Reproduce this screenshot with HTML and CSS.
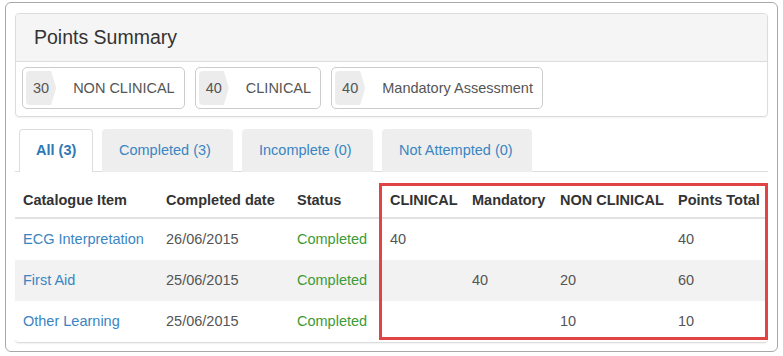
FILE: index.html
```html
<!DOCTYPE html>
<html>
<head>
<meta charset="utf-8">
<link rel="stylesheet" href="styles.css">
</head>
<body>
<div class="frame">
  <div class="panel">
    <div class="panel-heading">Points Summary</div>
    <div class="panel-body">
      <div class="badge"><span class="num">30</span><span class="label">NON CLINICAL</span></div>
      <div class="badge"><span class="num">40</span><span class="label">CLINICAL</span></div>
      <div class="badge"><span class="num">40</span><span class="label">Mandatory Assessment</span></div>
    </div>
  </div>
  <ul class="tabs">
    <li class="tab active t1">All (3)</li>
    <li class="tab t2">Completed (3)</li>
    <li class="tab t3">Incomplete (0)</li>
    <li class="tab t4">Not Attempted (0)</li>
  </ul>
  <div class="table-wrap">
    <table class="grid">
      <colgroup>
        <col class="c1"><col class="c2"><col class="c3"><col class="c4"><col class="c5"><col class="c6"><col class="c7">
      </colgroup>
      <thead>
        <tr><th>Catalogue Item</th><th>Completed date</th><th>Status</th><th>CLINICAL</th><th>Mandatory</th><th>NON CLINICAL</th><th>Points Total</th></tr>
      </thead>
      <tbody>
        <tr><td class="link">ECG Interpretation</td><td>26/06/2015</td><td class="ok">Completed</td><td>40</td><td></td><td></td><td>40</td></tr>
        <tr class="alt"><td class="link">First Aid</td><td>25/06/2015</td><td class="ok">Completed</td><td></td><td>40</td><td>20</td><td>60</td></tr>
        <tr><td class="link">Other Learning</td><td>25/06/2015</td><td class="ok">Completed</td><td></td><td></td><td>10</td><td>10</td></tr>
      </tbody>
    </table>
    <div class="highlight"></div>
  </div>
</div>
</body>
</html>
```

FILE: styles.css
```css
* { box-sizing: border-box; }
html, body { margin: 0; padding: 0; background: #fff; }
body {
  font-family: "Liberation Sans", Arial, sans-serif;
  font-size: 14.5px;
  color: #555;
}
.frame {
  margin: 2px 5px 0 5px;
  width: 773px;
  height: 350px;
  border: 1px solid #a8a8a8;
  border-radius: 6px;
  padding: 10px 9px 9px 9px;
}
.panel {
  border: 1px solid #dcdcdc;
  border-radius: 4px;
  box-shadow: 0 1px 2px rgba(0,0,0,0.06);
}
.panel-heading {
  background: #f5f5f5;
  border-bottom: 1px solid #dcdcdc;
  border-radius: 3px 3px 0 0;
  height: 48px;
  line-height: 47px;
  padding-left: 18px;
  font-size: 19.5px;
  color: #333;
}
.panel-body {
  display: flex;
  gap: 10px;
  padding: 5px 6px 7px 6px;
}
.badge {
  display: flex;
  align-items: center;
  border: 1px solid #ccc;
  border-radius: 5px;
  padding: 3px;
  height: 42px;
}
.num {
  background: #ececec;
  height: 34px;
  line-height: 34px;
  padding: 0 7px 0 7px;
  border-radius: 4px 0 0 4px;
  clip-path: polygon(0 0, calc(100% - 5px) 0, 100% 50%, calc(100% - 5px) 100%, 0 100%);
  color: #555;
}
.label {
  margin-left: 17px;
  margin-right: 6px;
  color: #555;
}
.tabs {
  list-style: none;
  margin: 12px 0 0 0;
  padding: 0 0 0 4px;
  display: flex;
  gap: 9px;
  border-bottom: 1px solid #ddd;
  height: 43px;
}
.tab {
  height: 43px;
  line-height: 41px;
  padding: 0 0 0 16px;
  background: #eee;
  border: 1px solid #eee;
  border-bottom: none;
  border-radius: 4px 4px 0 0;
  color: #3a85c2;
  white-space: nowrap;
}
.t1 { width: 74px; }
.t2 { width: 131px; }
.t3 { width: 131px; }
.t4 { width: 150px; }
.tab.active {
  background: #fff;
  border-color: #ddd;
  font-weight: bold;
  color: #2f78b5;
  margin-bottom: -1px;
}
.table-wrap {
  position: relative;
  padding-top: 10px;
  border-bottom: 1px solid #ddd;
  border-radius: 0 0 4px 4px;
  box-shadow: 0 1px 1px rgba(0,0,0,0.05);
}
.grid {
  width: 100%;
  border-collapse: collapse;
  table-layout: fixed;
}
.c1 { width: 143px; }
.c2 { width: 131px; }
.c3 { width: 93px; }
.c4 { width: 82px; }
.c5 { width: 88px; }
.c6 { width: 118px; }
.c7 { width: auto; }
.grid th {
  text-align: left;
  font-weight: bold;
  color: #333;
  padding: 9px 8px 7px 8px;
  line-height: 19px;
  border-bottom: 2px solid #e2e2e2;
  white-space: nowrap;
}
.grid td {
  padding: 10px 8px;
  line-height: 21px;
  color: #555;
  white-space: nowrap;
}
.grid tr.alt td { background: #f2f2f2; }
.grid td.link { color: #3a85c2; }
.grid td.ok { color: #3d9b35; }
.highlight {
  position: absolute;
  left: 364px;
  top: 11px;
  width: 389px;
  height: 157px;
  border: 3px solid #e04444;
  pointer-events: none;
}
```
